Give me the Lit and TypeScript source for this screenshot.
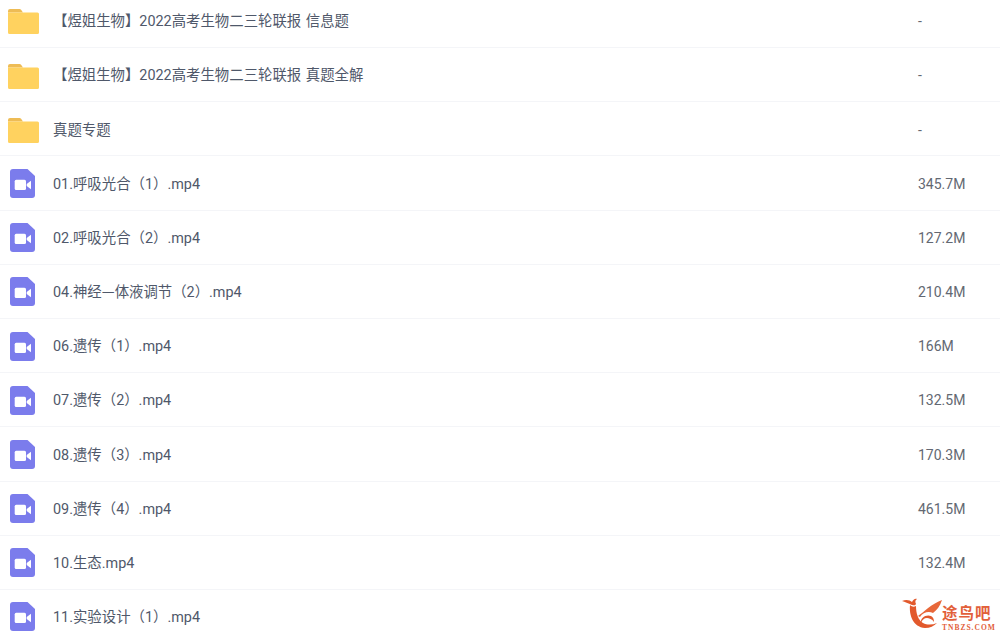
import { LitElement, html, css, svg } from "lit";
import { customElement } from "lit/decorators.js";

type Row = { name: unknown; size: string; kind: "folder" | "video" };
const rows: Row[] = [
  { name: "【煜姐生物】2022高考生物二三轮联报 信息题", size: "-", kind: "folder" },
  { name: "【煜姐生物】2022高考生物二三轮联报 真题全解", size: "-", kind: "folder" },
  { name: "真题专题", size: "-", kind: "folder" },
  { name: "01.呼吸光合（1）.mp4", size: "345.7M", kind: "video" },
  { name: "02.呼吸光合（2）.mp4", size: "127.2M", kind: "video" },
  { name: html`04.神经<span class="cjk">—</span>体液调节（2）.mp4`, size: "210.4M", kind: "video" },
  { name: "06.遗传（1）.mp4", size: "166M", kind: "video" },
  { name: "07.遗传（2）.mp4", size: "132.5M", kind: "video" },
  { name: "08.遗传（3）.mp4", size: "170.3M", kind: "video" },
  { name: "09.遗传（4）.mp4", size: "461.5M", kind: "video" },
  { name: "10.生态.mp4", size: "132.4M", kind: "video" },
  { name: "11.实验设计（1）.mp4", size: "", kind: "video" },
];

const folder = svg`<svg class="icon" width="31" height="25" viewBox="0 0 31 25">
  <path d="M0 2a2 2 0 0 1 2-2h9.500a2 2 0 0 1 1.600.8L15 3.500H0z" fill="#eebc55"/>
  <path d="M0 3.500h29.500a1.500 1.500 0 0 1 1.500 1.500V23.500a1.500 1.500 0 0 1-1.500 1.500H1.500A1.500 1.500 0 0 1 0 23.500z" fill="#ffd25f"/>
</svg>`;

const video = svg`<svg class="icon" width="25" height="29" viewBox="0 0 25 29">
  <path d="M0 3a3 3 0 0 1 3-3h14.500L25 7V26a3 3 0 0 1-3 3H3a3 3 0 0 1-3-3z" fill="#7b7cec"/>
  <rect x="4.700" y="10.700" width="11.300" height="10.300" rx="1.500" fill="#fff"/>
  <path d="M16.700 15l4.300-3.300v8.600l-4.300-3.300z" fill="#fff"/>
</svg>`;

@customElement("app-root")
export class AppRoot extends LitElement {
  static styles = css`
    :host {
      display: block;
      width: 1000px;
      height: 633px;
      overflow: hidden;
      position: relative;
      background: #fff;
      font-family: "Roboto", "Noto Sans CJK SC", sans-serif;
      color: #424e67;
    }
    .list {
      margin-top: -6.200px;
    }
    .row {
      display: grid;
      grid-template-columns: 53px 865px 1fr;
      align-items: center;
      height: 54.200px;
      box-sizing: border-box;
      border-bottom: 1px solid #f4f5f8;
    }
    .cell-folder {
      display: flex;
      padding: 3px 0 0 8px;
    }
    .cell-video {
      display: flex;
      padding: 1px 0 0 10px;
    }
    .name {
      font-size: 14.400px;
      white-space: pre;
      color: #4f586a;
      padding-bottom: 1.500px;
      word-spacing: 1px;
    }
    .cjk {
      font-family: "Noto Sans CJK SC", sans-serif;
    }
    .size {
      font-size: 14px;
      color: #636872;
      padding-top: 1.500px;
    }
    .mark {
      position: absolute;
      left: 901px;
      top: 597px;
      width: 99px;
      height: 36px;
    }
    .mark-name {
      position: absolute;
      left: 41px;
      top: 9px;
      font: 700 15.500px/16px "Liberation Sans", "Noto Sans CJK SC", sans-serif;
      letter-spacing: 1px;
      color: #e2603a;
      white-space: nowrap;
    }
    .mark-url {
      position: absolute;
      left: 41px;
      top: 27px;
      font: 700 7.500px/7px "Liberation Serif", serif;
      letter-spacing: 1px;
      color: #e2603a;
      white-space: nowrap;
    }
  `;

  render() {
    return html`
      <div class="list">
        ${rows.map(
          (r) => html`<div class="row">
            <div class=${r.kind === "folder" ? "cell-folder" : "cell-video"}>
              ${r.kind === "folder" ? folder : video}
            </div>
            <div class="name">${r.name}</div>
            <div class="size">${r.size}</div>
          </div>`
        )}
      </div>
      <div class="mark">
        <svg width="44" height="36" viewBox="0 0 44 36">
          <path d="M1 4C5 2 9 3 11 5 12 3 14 1 16 2 14 3 14 5 15 7 14 9 13 8 11 8 7 6 4 5 1 4z" fill="#e2592c"/>
          <path d="M9 8C8 18 12 30 24 31 29 31 33 29 36 26 31 28 26 28 22 26 17 23 15 16 15 9 13 10 11 10 9 8z" fill="#e2592c"/>
          <path d="M17 19C23 15 30 7 41 3 39 9 36 13 32 16 28 14 22 15 19 20z" fill="#e8683a"/>
          <path d="M20 26C19 21 25 17 30 19 32 20 33 22 33 25 31 22 28 21 26 21 23 21 21 23 20 26z" fill="#e2592c"/>
        </svg>
        <span class="mark-name">途鸟吧</span>
        <span class="mark-url">TNBZS.COM</span>
      </div>
    `;
  }
}
